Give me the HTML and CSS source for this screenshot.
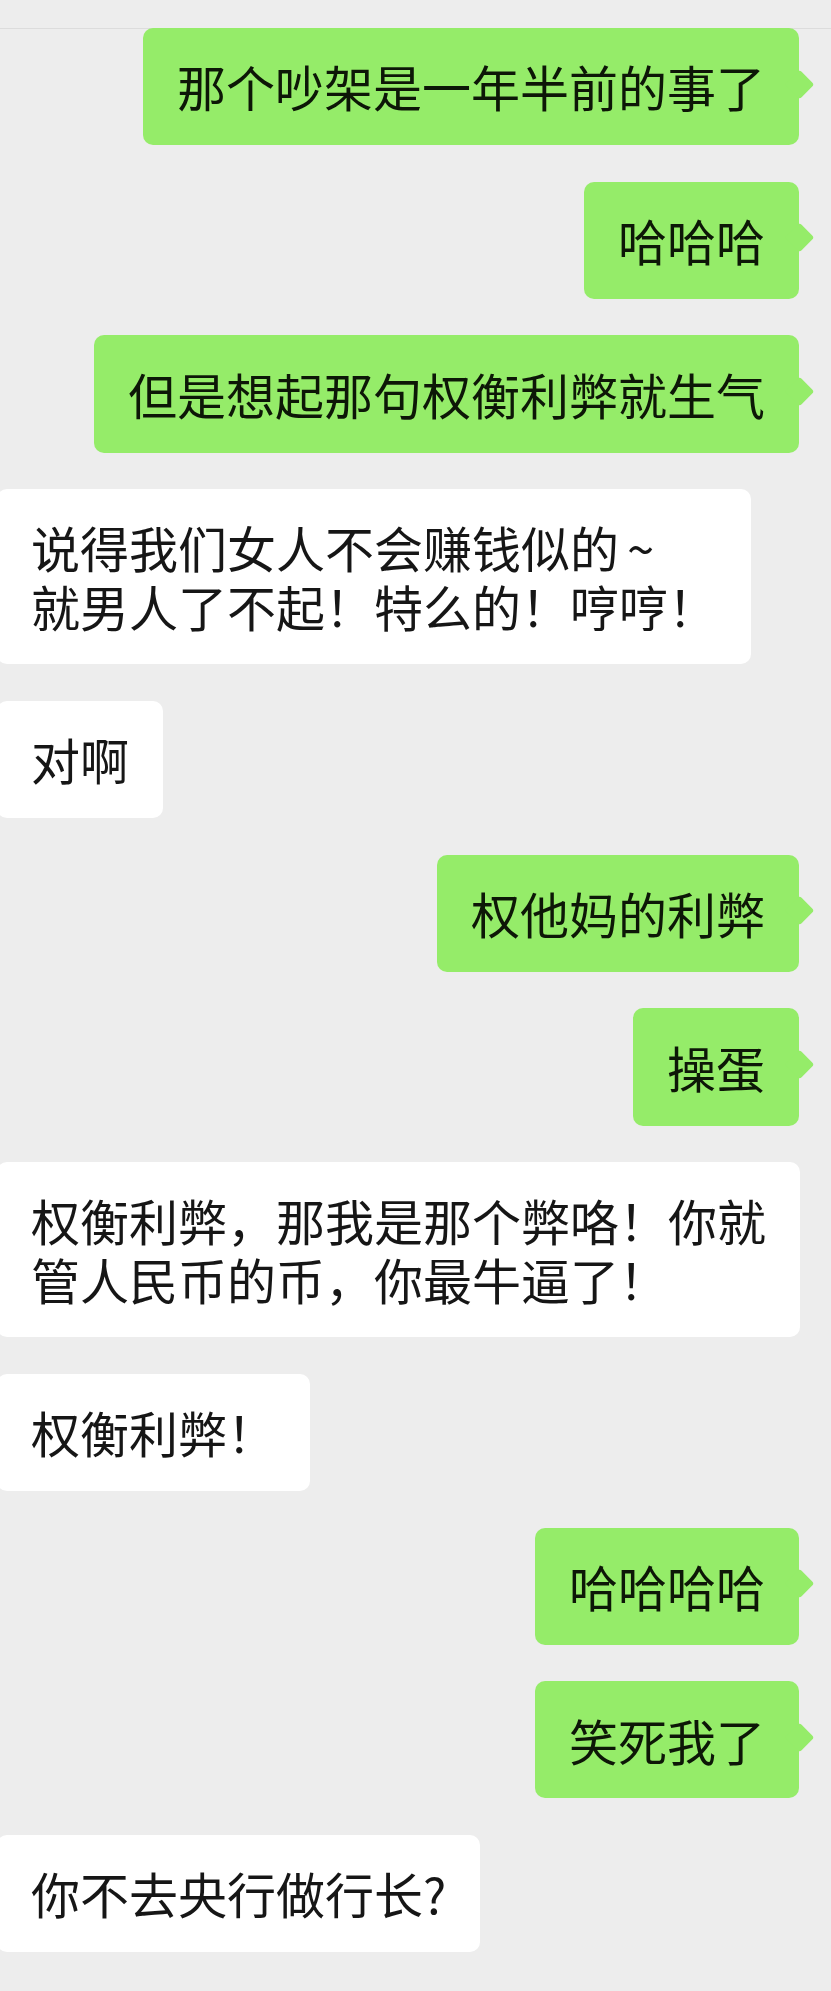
FILE: index.html
```html
<!DOCTYPE html>
<html lang="zh-CN">
<head>
<meta charset="utf-8">
<title>聊天记录</title>
<link rel="stylesheet" href="styles.css">
</head>
<body>
<div class="topbar"></div>
<div class="chat">
  <div class="row sent"><div class="bubble">那个吵架是一年半前的事了</div></div>
  <div class="row sent"><div class="bubble">哈哈哈</div></div>
  <div class="row sent"><div class="bubble">但是想起那句权衡利弊就生气</div></div>
  <div class="row recv"><div class="bubble">说得我们女人不会赚钱似的<span class="tilde">~</span><br>就男人了不起！特么的！哼哼！</div></div>
  <div class="row recv"><div class="bubble">对啊</div></div>
  <div class="row sent"><div class="bubble">权他妈的利弊</div></div>
  <div class="row sent"><div class="bubble">操蛋</div></div>
  <div class="row recv"><div class="bubble">权衡利弊，那我是那个弊咯！你就<br>管人民币的币，你最牛逼了！</div></div>
  <div class="row recv"><div class="bubble">权衡利弊！</div></div>
  <div class="row sent"><div class="bubble">哈哈哈哈</div></div>
  <div class="row sent"><div class="bubble">笑死我了</div></div>
  <div class="row recv"><div class="bubble">你不去央行做行长?</div></div>
</div>
</body>
</html>
```
FILE: styles.css
```css
html, body {
  margin: 0;
  padding: 0;
  background: #ededed;
}

body {
  width: 831px;
  height: 1991px;
  overflow: hidden;
  font-family: "Noto Sans CJK SC", "Noto Sans", sans-serif;
}

.topbar {
  height: 28px;
  border-bottom: 1px solid #dcdcdc;
}

.chat {
  display: flex;
  flex-direction: column;
  gap: 36.5px;
  padding: 0 32px 0 0;
  margin-top: -1px;
}

.row {
  display: flex;
}

.row.sent {
  justify-content: flex-end;
}

.row.recv {
  justify-content: flex-start;
  margin-left: -3px;
}

.bubble {
  position: relative;
  font-size: 49px;
  line-height: 58.3px;
  padding: 29.45px 34px;
  border-radius: 10px;
  white-space: nowrap;
  font-weight: 400;
}

.tilde {
  margin-left: 8px;
}

.sent .bubble {
  background: #95ec69;
  color: #0d1707;
}

.sent .bubble::after {
  content: "";
  position: absolute;
  right: -10.5px;
  top: 45.5px;
  width: 21px;
  height: 21px;
  background: #95ec69;
  border-radius: 3px;
  transform: rotate(45deg);
}

.recv .bubble {
  background: #ffffff;
  color: #161616;
}
```
